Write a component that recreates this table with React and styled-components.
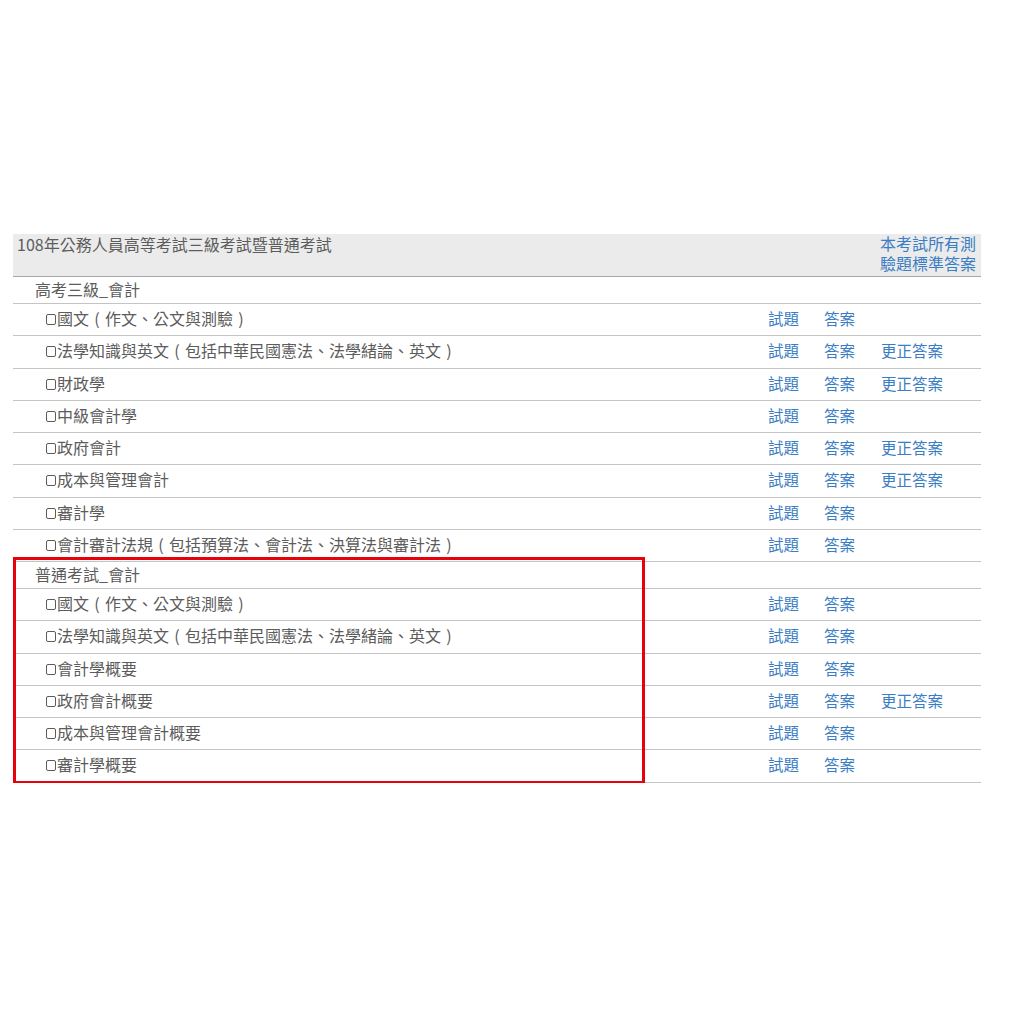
import styled, { createGlobalStyle } from "styled-components";

const GlobalStyle = createGlobalStyle`
  body {
    margin: 0;
    background: #fff;
    font-family: "Noto Sans CJK TC", "Noto Sans", sans-serif;
  }
`;

const sections = [
  {
    title: "高考三級_會計",
    items: [
      { name: "國文（作文、公文與測驗）" },
      { name: "法學知識與英文（包括中華民國憲法、法學緒論、英文）", fix: true },
      { name: "財政學", fix: true },
      { name: "中級會計學" },
      { name: "政府會計", fix: true },
      { name: "成本與管理會計", fix: true },
      { name: "審計學" },
      { name: "會計審計法規（包括預算法、會計法、決算法與審計法）" },
    ],
  },
  {
    title: "普通考試_會計",
    marked: true,
    items: [
      { name: "國文（作文、公文與測驗）" },
      { name: "法學知識與英文（包括中華民國憲法、法學緒論、英文）" },
      { name: "會計學概要" },
      { name: "政府會計概要", fix: true },
      { name: "成本與管理會計概要" },
      { name: "審計學概要" },
    ],
  },
];

// full-width brackets drawn centred in a one-em cell, as in the original page
const renderName = (name) =>
  name.split(/([（）])/).map((part, i) =>
    part === "（" || part === "）" ? (
      <Paren key={i}>{part === "（" ? "(" : ")"}</Paren>
    ) : (
      part
    )
  );

const App = () => {
  return (
    <>
      <GlobalStyle />
      <Page>
        <Table>
          <HeaderRow>
            <HeaderTitle>108年公務人員高等考試三級考試暨普通考試</HeaderTitle>
            <HeaderLink>
              本考試所有測
              <br />
              驗題標準答案
            </HeaderLink>
          </HeaderRow>
          {sections.map((sec) => (
            <Section key={sec.title}>
              {sec.marked && <Marker />}
              <SectionRow>{sec.title}</SectionRow>
              {sec.items.map((item) => (
                <ItemRow key={item.name}>
                  <ItemName>
                    <Box />
                    {renderName(item.name)}
                  </ItemName>
                  <LinkCell>試題</LinkCell>
                  <LinkCell>答案</LinkCell>
                  <LinkCell>{item.fix ? "更正答案" : ""}</LinkCell>
                </ItemRow>
              ))}
            </Section>
          ))}
        </Table>
      </Page>
    </>
  );
};

const Page = styled.div`
  padding: 234px 0 0 13px;
`;

const Table = styled.div`
  width: 968px;
  font-size: 16px;
  color: #5c5c5c;
`;

const HeaderRow = styled.div`
  display: grid;
  grid-template-columns: 1fr 101px;
  align-items: start;
  height: 42px;
  background: #ebebeb;
  border-bottom: 1px solid #a9a9a9;
`;

const HeaderTitle = styled.div`
  padding-left: 4px;
  line-height: 20px;
`;

const HeaderLink = styled.div`
  color: #3b7dc4;
  line-height: 20px;
  margin-top: -1px;
`;

const Section = styled.div`
  position: relative;
`;

const Marker = styled.div`
  position: absolute;
  left: 0;
  top: -5px;
  width: 632px;
  bottom: -1px;
  border: 3px solid #e8000b;
  box-sizing: border-box;
  pointer-events: none;
`;

const SectionRow = styled.div`
  height: 26px;
  line-height: 24px;
  padding-left: 22px;
  border-bottom: 1px solid #c4c4c4;
`;

const ItemRow = styled.div`
  display: grid;
  grid-template-columns: 1fr 56px 57px 100px;
  align-items: center;
  height: 32.25px;
  padding-bottom: 3px;
  box-sizing: border-box;
  border-bottom: 1px solid #c4c4c4;
`;

const ItemName = styled.div`
  padding-left: 33px;
  display: flex;
  align-items: center;
  white-space: pre;
`;

const Paren = styled.span`
  display: inline-block;
  width: 1em;
  text-align: center;
`;

const Box = styled.span`
  display: inline-block;
  width: 8px;
  height: 9px;
  border: 1px solid #5c5c5c;
  border-radius: 2px;
  margin: 3px 1px 0 0;
`;

const LinkCell = styled.div`
  color: #3b7dc4;
  font-size: 15.5px;
  white-space: nowrap;
`;

export default App;
